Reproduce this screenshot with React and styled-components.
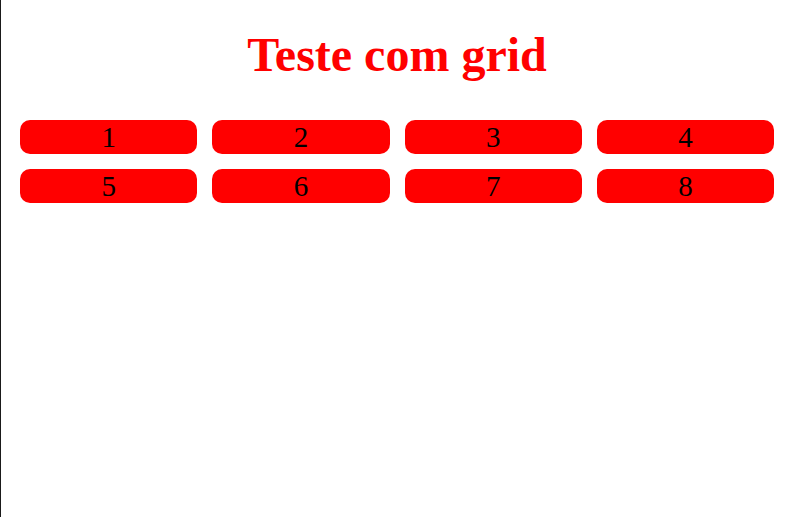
import React from 'react';
import styled, { createGlobalStyle } from 'styled-components';

const GlobalStyle = createGlobalStyle`
  html, body {
    margin: 0;
    padding: 0;
    background: #fff;
  }
  body {
    font-family: "Liberation Serif", "Times New Roman", serif;
  }
`;

const Page = styled.div`
  min-height: 517px;
  box-sizing: border-box;
  border-left: 1px solid #1a1a1a;
  padding: 0 16px 0 19px;
`;

const Title = styled.h1`
  margin: 0;
  padding-top: 27px;
  text-align: center;
  font-size: 48px;
  line-height: 55px;
  font-weight: bold;
  color: red;
`;

const Grid = styled.div`
  display: grid;
  grid-template-columns: repeat(4, 1fr);
  gap: 15px;
  margin-top: 38px;
`;

const Cell = styled.div`
  background: red;
  border-radius: 10px;
  text-align: center;
  font-size: 29px;
  line-height: 34px;
  height: 34px;
  color: #000;
`;

const items = [1, 2, 3, 4, 5, 6, 7, 8];

export default function App() {
  return (
    <>
      <GlobalStyle />
      <Page>
        <Title>Teste com grid</Title>
        <Grid>
          {items.map((n) => (
            <Cell key={n}>{n}</Cell>
          ))}
        </Grid>
      </Page>
    </>
  );
}
